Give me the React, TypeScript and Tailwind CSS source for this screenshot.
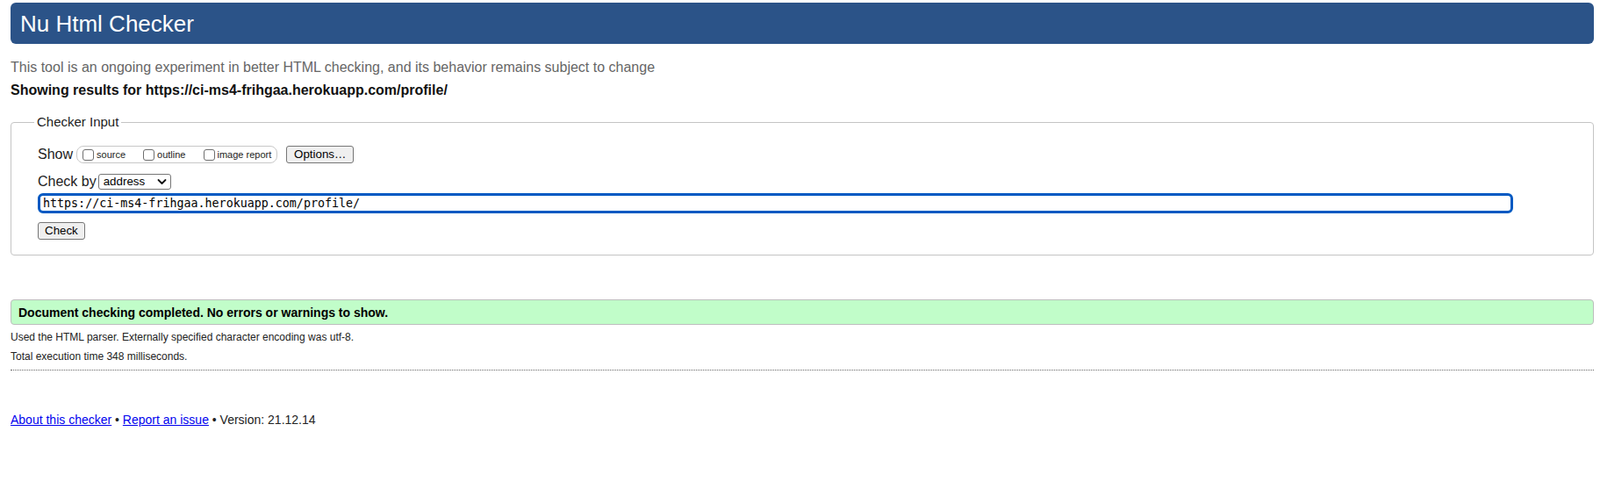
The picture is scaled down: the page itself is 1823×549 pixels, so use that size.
export default function App() {
  return (
    <div className="min-h-screen bg-white pt-[3px] pl-[12px] pr-[7px] font-['Liberation_Sans',Arial,sans-serif] text-[#222]">
      <h1 className="flex h-[47px] items-center rounded-[6px] bg-[#2b5388] pl-[11px] text-[26px] leading-[30px] font-normal text-white">
        Nu Html Checker
      </h1>

      <p className="mt-[17px] text-[16px] leading-[20px] text-[#666]">
        This tool is an ongoing experiment in better HTML checking, and its behavior remains subject to change
      </p>
      <p className="mt-[6px] text-[16px] font-bold leading-[20px] text-[#111]">
        Showing results for https://ci-ms4-frihgaa.herokuapp.com/profile/
      </p>

      {/* Checker input */}
      <fieldset className="mt-[16px] rounded-[4px] border border-[#c4c4c4] pl-[30px] pt-[17px] pb-[17px]">
        <legend className="-ml-[4px] px-[3px] text-[15px] leading-[20px]">Checker Input</legend>

        <div className="flex h-[20px] items-center">
          <span className="text-[16px] leading-[20px]">Show</span>
          <div className="ml-[4px] flex h-[20px] w-[229px] items-center rounded-[8px] border border-[#c8c8c8] pl-[6px]">
            <label className="flex items-center">
              <input type="checkbox" className="h-[13px] w-[13px] appearance-none rounded-[3px] border border-[#6f6f6f] bg-white" />
              <span className="ml-[3px] text-[11px] leading-[13px]">source</span>
            </label>
            <label className="ml-[20px] flex items-center">
              <input type="checkbox" className="h-[13px] w-[13px] appearance-none rounded-[3px] border border-[#6f6f6f] bg-white" />
              <span className="ml-[3px] text-[11px] leading-[13px]">outline</span>
            </label>
            <label className="ml-[21px] flex items-center">
              <input type="checkbox" className="h-[13px] w-[13px] appearance-none rounded-[3px] border border-[#6f6f6f] bg-white" />
              <span className="ml-[2px] text-[11px] leading-[13px]">image report</span>
            </label>
          </div>
          <button className="ml-[10px] h-[20px] rounded-[3px] border border-[#767676] bg-[#efefef] px-[8px] text-[13.33px] leading-[16px] text-black">
            Options…
          </button>
        </div>

        <div className="mt-[11px] flex h-[20px] items-center">
          <span className="text-[16px] leading-[20px]">Check by</span>
          <div className="relative ml-[2px] h-[18px] w-[83px]">
            <select className="block h-[18px] w-[83px] appearance-none rounded-[3px] border border-[#767676] bg-white py-0 pl-[5px] text-[13.33px] leading-[16px] text-black">
              <option>address</option>
            </select>
            <svg className="pointer-events-none absolute right-[5px] top-[5px] h-[8px] w-[11px]" viewBox="0 0 11 8" fill="none">
              <path d="M1.5 2 L5.5 6 L9.5 2" stroke="#111" strokeWidth="1.8" strokeLinecap="round" strokeLinejoin="round" />
            </svg>
          </div>
        </div>

        <input
          type="text"
          readOnly
          value="https://ci-ms4-frihgaa.herokuapp.com/profile/"
          className="mt-[3px] block h-[23px] w-[1681px] rounded-[6px] border-[3px] border-[#0059c2] px-[3px] font-['DejaVu_Sans_Mono',monospace] text-[13.33px] text-black outline-none"
        />

        <button className="mt-[10px] block h-[20px] rounded-[3px] border border-[#767676] bg-[#efefef] px-[7px] text-[13.33px] leading-[16px] text-black">
          Check
        </button>
      </fieldset>

      {/* Result */}
      <div className="mt-[50px] rounded-[4px] border border-[#bdbdbd] bg-[#c1fdc9] pl-[8px] pt-[6px] pb-[4px] text-[14px] font-bold leading-[17px] text-black">
        Document checking completed. No errors or warnings to show.
      </div>
      <p className="mt-[7px] text-[12px] leading-[15px] text-[#222]">
        Used the HTML parser. Externally specified character encoding was utf-8.
      </p>
      <p className="mt-[7px] text-[12px] leading-[15px] text-[#222]">Total execution time 348 milliseconds.</p>
      <hr className="mt-[7px] border-0 border-t border-dotted border-[#666]" />

      <p className="mt-[48px] text-[14px] leading-[17px] text-[#222]">
        <a href="#" className="text-[#0000ee] underline">About this checker</a>
        {" • "}
        <a href="#" className="text-[#0000ee] underline">Report an issue</a>
        {" • Version: 21.12.14"}
      </p>
    </div>
  );
}
